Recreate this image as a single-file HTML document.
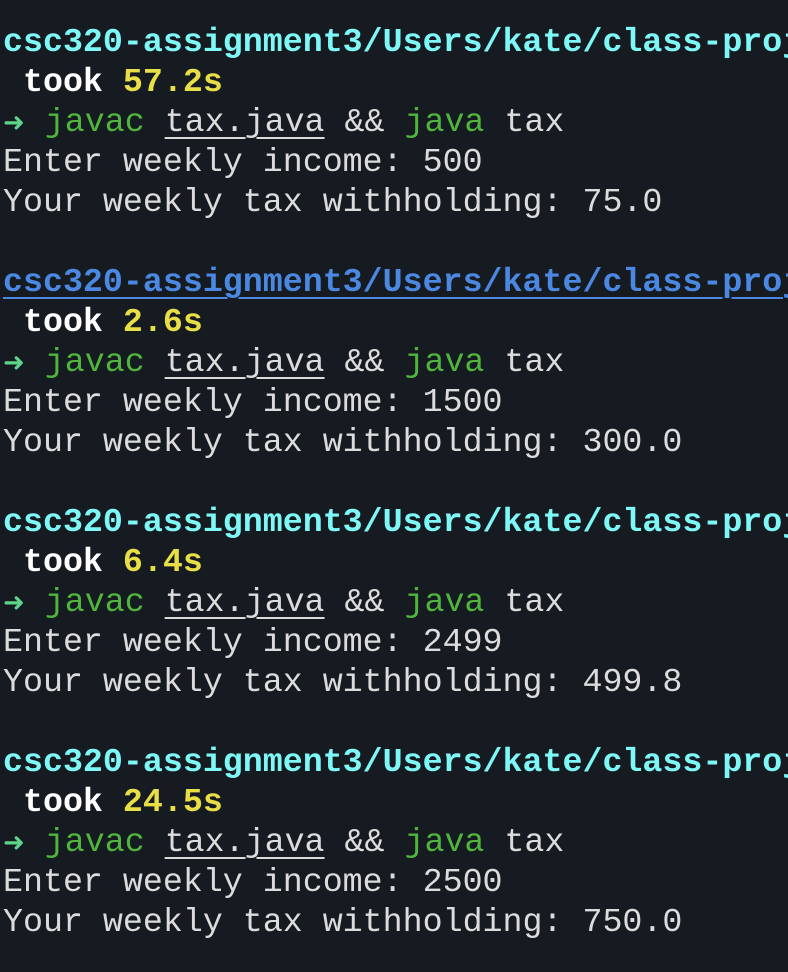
<!DOCTYPE html>
<html><head><style>
html,body{margin:0;padding:0;background:#161a21;width:788px;height:972px;overflow:hidden}
.t{position:absolute;top:22px;left:3px;font-family:"Liberation Mono",monospace;font-size:33.3px;color:#dcdcdc;width:900px}
.t div{height:40px;line-height:40px;white-space:pre}
.c{color:#7ef7f7;font-weight:bold}
.b{color:#4a88e2;font-weight:bold;text-decoration:underline;text-decoration-thickness:2px;text-underline-offset:6px}
.w{color:#fff;font-weight:bold}
.y{color:#e8de46;font-weight:bold}
.g{color:#4fb53c}
.a{color:#5fd38a;font-size:26px;line-height:0}
.u{text-decoration:underline;text-decoration-thickness:2px;text-underline-offset:6px}
</style></head><body><div class="t"><div><span class="c">csc320-assignment3/Users/kate/class-proj</span></div><div> <span class="w">took</span> <span class="y">57.2s</span></div><div><span class="a">➜</span> <span class="g">javac</span> <span class="u">tax.java</span> &amp;&amp; <span class="g">java</span> tax</div><div>Enter weekly income: 500</div><div>Your weekly tax withholding: 75.0</div><div></div><div><span class="b">csc320-assignment3/Users/kate/class-proj</span></div><div> <span class="w">took</span> <span class="y">2.6s</span></div><div><span class="a">➜</span> <span class="g">javac</span> <span class="u">tax.java</span> &amp;&amp; <span class="g">java</span> tax</div><div>Enter weekly income: 1500</div><div>Your weekly tax withholding: 300.0</div><div></div><div><span class="c">csc320-assignment3/Users/kate/class-proj</span></div><div> <span class="w">took</span> <span class="y">6.4s</span></div><div><span class="a">➜</span> <span class="g">javac</span> <span class="u">tax.java</span> &amp;&amp; <span class="g">java</span> tax</div><div>Enter weekly income: 2499</div><div>Your weekly tax withholding: 499.8</div><div></div><div><span class="c">csc320-assignment3/Users/kate/class-proj</span></div><div> <span class="w">took</span> <span class="y">24.5s</span></div><div><span class="a">➜</span> <span class="g">javac</span> <span class="u">tax.java</span> &amp;&amp; <span class="g">java</span> tax</div><div>Enter weekly income: 2500</div><div>Your weekly tax withholding: 750.0</div></div></body></html>
